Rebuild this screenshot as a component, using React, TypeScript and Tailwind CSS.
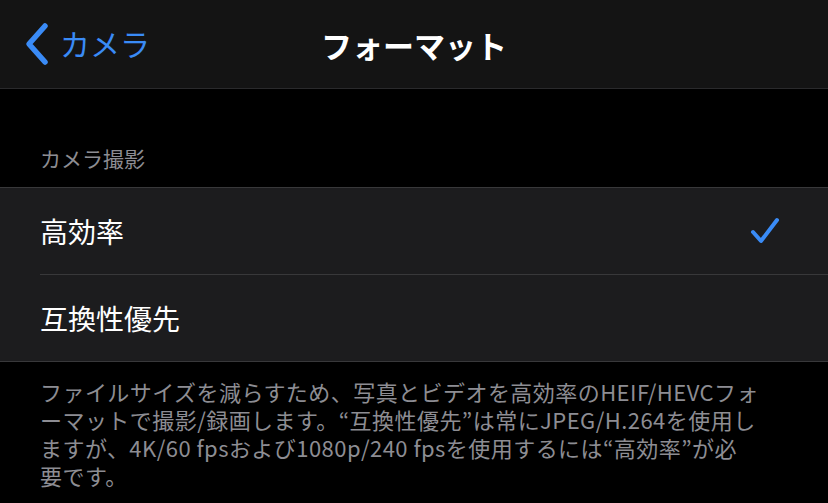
import React from "react";

const font = { fontFamily: '"Noto Sans CJK JP", "Noto Sans", sans-serif' };

function Chevron() {
  return (
    <svg width="26" height="44" viewBox="0 0 26 44" className="shrink-0">
      <path d="M21 4 L5 22 L21 40" fill="none" stroke="#3a8bf6" strokeWidth="5.5" strokeLinecap="round" strokeLinejoin="round" />
    </svg>
  );
}

function Check() {
  return (
    <svg width="32" height="30" viewBox="0 0 32 30">
      <path d="M3 16 L11 25 L27 4" fill="none" stroke="#3a8bf6" strokeWidth="4" strokeLinecap="round" strokeLinejoin="round" />
    </svg>
  );
}

const footerLines = [
  "ファイルサイズを減らすため、写真とビデオを高効率のHEIF/HEVCフォ",
  "ーマットで撮影/録画します。“互換性優先”は常にJPEG/H.264を使用し",
  "ますが、4K/60 fpsおよび1080p/240 fpsを使用するには“高効率”が必",
  "要です。",
];

export default function App() {
  return (
    <div className="h-[503px] w-[828px] overflow-hidden bg-black text-white" style={font}>
      <header className="relative flex h-[89px] items-center border-b border-[#2a2a2c] bg-[#141414] px-[24px]">
        <div className="flex items-center gap-[10px] text-[30px] text-[#3a8bf6]">
          <Chevron />
          <span className="-mt-[2px]">カメラ</span>
        </div>
        <h1 className="absolute left-0 right-0 text-center text-[31px] font-bold leading-none">フォーマット</h1>
      </header>

      <div className="px-[40px] pt-[54px] pb-[12px] text-[21px] text-[#8d8d93]">カメラ撮影</div>

      <div className="border-y border-[#38383a] bg-[#1c1c1e]">
        <div className="flex h-[86px] items-center justify-between pl-[40px] pr-[46px]">
          <span className="text-[28px]">高効率</span>
          <Check />
        </div>
        <div className="ml-[40px] h-px bg-[#38383a]" />
        <div className="flex h-[86px] items-center pl-[40px]">
          <span className="text-[28px]">互換性優先</span>
        </div>
      </div>

      <div className="flex flex-col px-[40px] pt-[15px] text-[22px] tracking-[0.45px] text-[#8d8d93]">
        {footerLines.map((line) => (
          <div key={line} className="h-[28px] whitespace-nowrap leading-[28px]">
            {line}
          </div>
        ))}
      </div>
    </div>
  );
}
